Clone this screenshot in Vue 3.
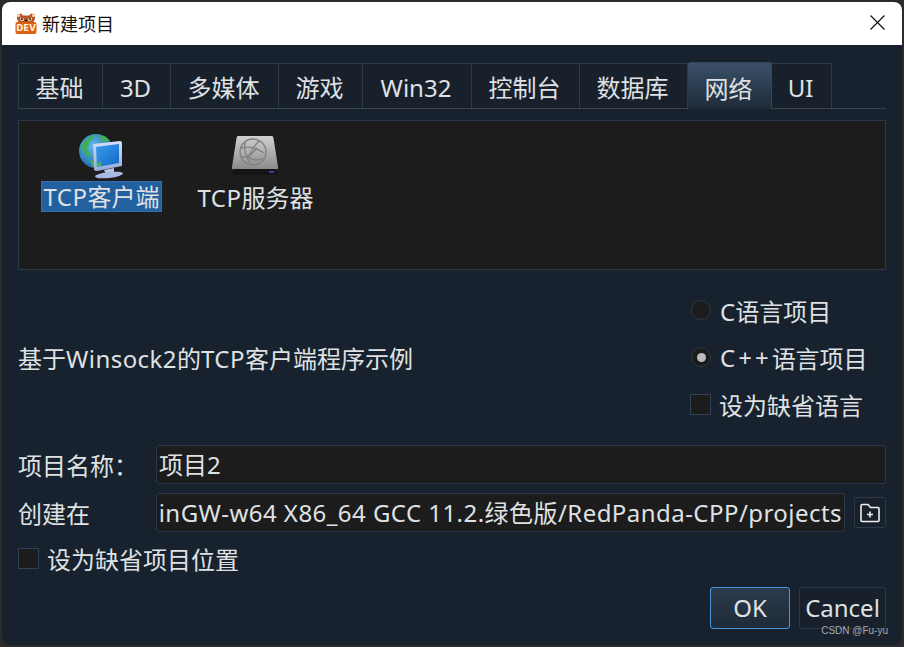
<template>
  <div class="window">
    <!-- title bar -->
    <header class="titlebar">
      <svg class="logo" width="24" height="24" viewBox="0 0 24 24">
        <path d="M3 3.5 L7 2.5 L9 4.5 L15 4.5 L17 2.5 L21 3.5 L21 8 L19.5 11 L4.5 11 L3 8 Z" fill="#b5562a" />
        <circle cx="4.5" cy="4.5" r="1.6" fill="#f6d9b0" />
        <circle cx="19.5" cy="4.5" r="1.6" fill="#f6d9b0" />
        <path d="M6 6.5 L10 7.5 L9.5 10 L6.5 9.5 Z M18 6.5 L14 7.5 L14.5 10 L17.5 9.5 Z" fill="#f8e6c8" />
        <circle cx="8" cy="8" r="1" fill="#3a1d10" />
        <circle cx="16" cy="8" r="1" fill="#3a1d10" />
        <rect x="10.8" y="8.6" width="2.4" height="1.6" fill="#3a1d10" />
        <path d="M1.5 13 Q1.5 11 3.5 11 L20.5 11 Q22.5 11 22.5 13 L22.5 21 Q22.5 23 20.5 23 L3.5 23 Q1.5 23 1.5 21 Z" fill="#dd5f10" />
        <text x="12" y="20" class="logo-text" text-anchor="middle">DEV</text>
      </svg>
      <span class="title">新建项目</span>
      <svg class="close" width="15" height="15" viewBox="0 0 15 15">
        <path d="M0.5 0.5 L14.5 14.5 M14.5 0.5 L0.5 14.5" stroke="#111" stroke-width="1.2" fill="none" />
      </svg>
    </header>

    <main class="body">
      <!-- tabs -->
      <nav class="tabs">
        <div
          v-for="tab in tabs"
          :key="tab.label"
          :class="['tab', { active: tab.label === '网络' }]"
          :style="{ width: tab.width + 'px' }"
        >{{ tab.label }}</div>
      </nav>

      <!-- template list -->
      <section class="list">
        <div class="item first">
          <svg width="48" height="46" viewBox="0 0 48 46">
            <defs>
              <radialGradient id="globe" cx="0.4" cy="0.35" r="0.7">
                <stop offset="0" stop-color="#5fb6e8" />
                <stop offset="1" stop-color="#1d69a8" />
              </radialGradient>
              <linearGradient id="screen" x1="0" y1="0" x2="1" y2="1">
                <stop offset="0" stop-color="#3a9cf0" />
                <stop offset="1" stop-color="#1268c4" />
              </linearGradient>
              <linearGradient id="bezel" x1="0" y1="0" x2="0" y2="1">
                <stop offset="0" stop-color="#d3def8" />
                <stop offset="1" stop-color="#97a9da" />
              </linearGradient>
            </defs>
            <circle cx="18" cy="18" r="17" fill="url(#globe)" />
            <path d="M3 14 Q7 4 17 2 Q16 7 11 8 Q12 12 9 14 Q10 20 14 23 Q12 26 8 22 Q4 18 3 14 Z" fill="#3fae5b" />
            <path d="M20 2 Q28 2 32 8 L25 9 Q22 6 20 2 Z M12 27 Q17 26 17 31 Q16 34 14 34 Z" fill="#3fae5b" />
            <path d="M15 11 L42 8 Q44 8 44 10 L44 33 L19 38 Q16 38 16 36 Z" fill="url(#bezel)" />
            <path d="M18 14 L41 11 L41 30 L19 34 Z" fill="url(#screen)" />
            <path d="M18.500 30 L23 29 L23 33 L19 34 Z" fill="#4db36a" />
            <path d="M26 37 L36 35 L36 39 L28 41 Z" fill="#b7c5e8" />
            <ellipse cx="31" cy="42" rx="14" ry="3" fill="#a8b9e3" transform="rotate(-6 31 42)" />
          </svg>
          <span class="item-label selected"><span class="lat">TCP</span>客户端</span>
        </div>
        <div class="item second">
          <svg class="disk" width="48" height="46" viewBox="0 0 48 46">
            <defs>
              <linearGradient id="disk" x1="0" y1="0" x2="0" y2="1">
                <stop offset="0" stop-color="#d0d0d0" />
                <stop offset="1" stop-color="#858585" />
              </linearGradient>
            </defs>
            <path d="M7 2 L41 2 Q42 2 42.500 4 L47 33 Q47 38 43 38 L5 38 Q1 38 1 33 L5.500 4 Q6 2 7 2 Z" fill="url(#disk)" />
            <rect x="1" y="35" width="46" height="6" rx="2" fill="#141414" />
            <rect x="38" y="37" width="5" height="1.600" fill="#3f45e0" />
            <g fill="none" stroke="#808080" stroke-width="1.300">
              <circle cx="22" cy="18" r="13" />
              <path d="M10 14 Q22 11 33 19 M14 8 Q12 19 20 30 M28 7 Q20 15 18 24 Q26 28 32 24 M11 23 Q18 24 26 14" />
            </g>
          </svg>
          <span class="item-label"><span class="lat">TCP</span>服务器</span>
        </div>
      </section>

      <!-- description and language -->
      <section class="info">
        <p class="desc">基于<span class="lat">Winsock2</span>的<span class="lat">TCP</span>客户端程序示例</p>
        <div class="lang">
          <label class="opt"><span class="radio"></span>C语言项目</label>
          <label class="opt"><span class="radio on"></span><span class="cpp">C++</span>语言项目</label>
          <label class="opt"><span class="check"></span>设为缺省语言</label>
        </div>
      </section>

      <!-- project fields -->
      <section class="fields">
        <div class="field">
          <span class="field-label">项目名称：</span>
          <div class="input">项目2</div>
        </div>
        <div class="field">
          <span class="field-label">创建在</span>
          <div class="input path"><span class="lat">inGW-w64 X86_64 GCC 11.2.绿色版/RedPanda-CPP/projects</span></div>
          <button class="folder" type="button">
            <svg width="20" height="20" viewBox="0 0 20 20">
              <path d="M1 3 Q1 1.500 2.500 1.500 L8 1.500 L10.500 4.500 L18 4.500 Q19 4.500 19 5.500 L19 17.500 Q19 18.500 18 18.500 L2 18.500 Q1 18.500 1 17.500 Z M10 8.500 L10 14.500 M7 11.500 L13 11.500" fill="none" stroke="#f0f0f0" stroke-width="1.600" />
            </svg>
          </button>
        </div>
        <label class="opt default-loc"><span class="check"></span>设为缺省项目位置</label>
      </section>

      <!-- actions -->
      <footer class="actions">
        <button class="btn primary" type="button">OK</button>
        <button class="btn" type="button">Cancel</button>
      </footer>
    </main>

    <span class="watermark">CSDN @Fu-yu</span>
  </div>
</template>

<script setup>
const tabs = [
  { label: '基础', width: 85 },
  { label: '3D', width: 68 },
  { label: '多媒体', width: 108 },
  { label: '游戏', width: 84 },
  { label: 'Win32', width: 109 },
  { label: '控制台', width: 108 },
  { label: '数据库', width: 108 },
  { label: '网络', width: 84 },
  { label: 'UI', width: 60 }
]
</script>

<style>
html, body { margin: 0; background: #2b2b2b; }
</style>

<style scoped>
.window {
  position: relative;
  box-sizing: border-box;
  width: 900px;
  height: 643px;
  margin: 2px 0 0 2px;
  display: flex;
  flex-direction: column;
  border-radius: 8px;
  overflow: hidden;
  background: #18222e;
  color: #dfe1e3;
  font-family: "Noto Sans", "Noto Sans CJK SC", sans-serif;
  font-size: 24px;
}

/* latin text runs a bit wider in the original ui font */
.lat { letter-spacing: 0.45px; }
.cpp { letter-spacing: 3px; }

/* title bar */
.titlebar {
  flex: none;
  height: 43px;
  display: flex;
  align-items: center;
  padding: 0 17px 0 12px;
  background: #fff;
  color: #111;
}
.logo { flex: none; margin-right: 4px; margin-top: -2px; }
.logo-text {
  font-family: "DejaVu Sans", sans-serif;
  font-size: 8.5px;
  font-weight: 700;
  fill: #fff3e0;
}
.title { font-size: 18px; line-height: 24px; }
.close { margin-left: auto; margin-top: -2px; }

.body {
  flex: 1;
  display: flex;
  flex-direction: column;
  padding: 16px 16px 0;
  min-height: 0;
}

/* tabs */
.tabs {
  flex: none;
  display: flex;
  align-items: flex-end;
  height: 47px;
  border-bottom: 1px solid #3b444e;
}
.tab {
  box-sizing: border-box;
  height: 45px;
  padding: 3px 2px 0 0;
  display: flex;
  align-items: center;
  justify-content: center;
  background: #17202b;
  border: 1px solid #2c3b4c;
  border-left-width: 0;
  border-bottom: 0;
  line-height: 1;
}
.tab:first-child { border-left-width: 1px; border-top-left-radius: 2px; }
.tab.active {
  height: 47px;
  margin-bottom: -1px;
  padding-top: 5px;
  background: linear-gradient(#3a5068, #1d2a38);
  border-radius: 2px 2px 0 0;
  border-color: #33475c;
}

/* template list */
.list {
  flex: none;
  box-sizing: border-box;
  height: 150px;
  margin-top: 11px;
  display: flex;
  background: #1c1c1c;
  border: 1px solid #2c3847;
}
.item {
  display: flex;
  flex-direction: column;
  align-items: center;
  padding-top: 12px;
}
.item svg { display: block; }
.item.first { margin-left: 21px; width: 123px; }
.item.second { margin-left: 33px; width: 119px; }
.disk { margin-left: -1px; margin-top: 1px; margin-bottom: -1px; }
.item-label {
  box-sizing: border-box;
  height: 31px;
  margin-top: 2px;
  padding: 2px 2px 0;
  line-height: 30px;
  white-space: nowrap;
  font-size: 24px;
}
.item-label.selected {
  background: #23609f;
  border: 1px solid #3271ad;
  line-height: 28px;
  padding: 1px 2px 0 2px;
}

/* description and language */
.info {
  flex: none;
  height: 140px;
  margin-top: 17px;
  display: flex;
  justify-content: space-between;
  align-items: center;
}
.desc { margin: 0; white-space: nowrap; }
.lang {
  width: 196px;
  display: flex;
  flex-direction: column;
  gap: 13px;
}
.opt {
  display: flex;
  align-items: center;
  height: 34px;
  white-space: nowrap;
}
.radio {
  flex: none;
  box-sizing: border-box;
  width: 20px;
  height: 20px;
  margin-left: 1px;
  margin-right: 9px;
  border-radius: 50%;
  background: #1c1c1c;
  border: 1px solid #2c3a49;
  display: flex;
  align-items: center;
  justify-content: center;
}
.radio.on::after {
  content: "";
  width: 9px;
  height: 9px;
  border-radius: 50%;
  background: #bdbdbd;
}
.check {
  flex: none;
  box-sizing: border-box;
  width: 21px;
  height: 21px;
  margin-right: 8px;
  background: #1c1c1c;
  border: 1px solid #2f4257;
}

/* project fields */
.fields {
  flex: none;
  margin-top: 18px;
  display: flex;
  flex-direction: column;
  gap: 9px;
}
.field {
  display: flex;
  align-items: center;
  height: 39px;
}
.field-label { flex: none; width: 138px; white-space: nowrap; }
.input {
  flex: 1;
  box-sizing: border-box;
  height: 39px;
  padding: 0 2px;
  line-height: 37px;
  background: #1c1c1c;
  border: 1px solid #2c3847;
  border-radius: 3px;
  white-space: nowrap;
  overflow: hidden;
  min-width: 0;
}
.input.path { display: flex; justify-content: flex-end; }
.folder {
  flex: none;
  box-sizing: border-box;
  width: 32px;
  height: 31px;
  margin-left: 9px;
  padding: 0;
  display: flex;
  align-items: center;
  justify-content: center;
  background: #17202b;
  border: 1px solid #2c3b4c;
  border-radius: 3px;
}

/* actions */
.actions {
  flex: none;
  margin-top: 12px;
  display: flex;
  justify-content: flex-end;
  gap: 9px;
}
.btn {
  box-sizing: border-box;
  height: 42px;
  padding: 0 4px;
  font: inherit;
  color: inherit;
  line-height: 1;
  background: #17202b;
  border: 1px solid #2c3b4c;
  border-radius: 3px;
}
.btn.primary {
  width: 80px;
  background: linear-gradient(#2a3b4d, #1e2b39);
  border-color: #4a96dc;
}
.btn:not(.primary) { width: 87px; }

.watermark {
  position: absolute;
  right: 14px;
  bottom: 8px;
  font-family: "Liberation Sans", sans-serif;
  font-size: 10px;
  line-height: 13px;
  color: #a4a8ad;
}
</style>
